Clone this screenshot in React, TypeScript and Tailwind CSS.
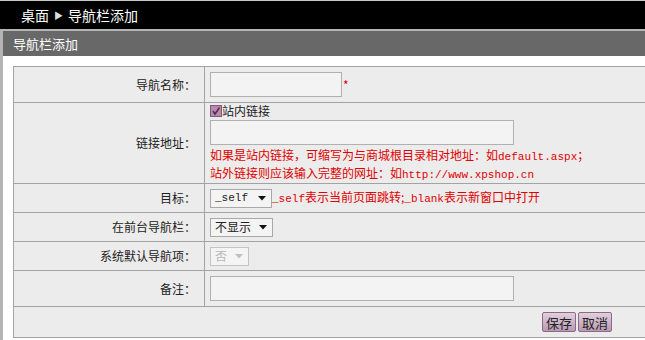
import React from "react";

const cjk = "font-['Noto_Sans_CJK_SC','Noto_Sans',sans-serif]";
const mono = "font-['Liberation_Mono','Noto_Sans_CJK_SC',monospace] text-[11px]";

function FakeSelect({
  value,
  width,
  disabled,
  mono: isMono,
}: {
  value: string;
  width: string;
  disabled?: boolean;
  mono?: boolean;
}) {
  return (
    <div
      className={`${width} h-[19px] flex items-center justify-between border pl-[4px] pr-[5px] bg-[#f4f4f4] ${
        disabled ? "border-[#c4c4c4] text-[#b8b8b8]" : "border-[#a8a8a8] text-[#222]"
      }`}
    >
      <span className={isMono ? "font-['Liberation_Mono',monospace] text-[11px]" : "text-[12px]"}>
        {value}
      </span>
      <svg width="8" height="5" viewBox="0 0 8 5">
        <path d="M0 0 H8 L4 4.5 Z" fill={disabled ? "#c0c0c0" : "#111"} />
      </svg>
    </div>
  );
}

function Row({
  label,
  height,
  children,
}: {
  label: string;
  height: string;
  children?: React.ReactNode;
}) {
  return (
    <div className={`grid grid-cols-[191px_1fr] border-b border-[#a3a3a3] ${height}`}>
      <div className="border-r border-[#a3a3a3] flex items-center justify-end pr-[8px] text-[12px] text-[#222]">
        {label}
      </div>
      <div className="flex flex-col justify-center pl-[5px]">{children}</div>
    </div>
  );
}

export default function App() {
  return (
    <div className={`w-[645px] h-[340px] overflow-hidden bg-white ${cjk}`}>
      <div className="border-t border-[#c8c8c8] h-[29px] bg-black flex items-center pl-[21px] text-white text-[14px]">
        桌面
        <span className="text-[9px] mx-[5px] mt-[2px] text-[#ddd]">▶</span>
        导航栏添加
      </div>
      <div className="border-t-2 border-l-[3px] border-[#b4b4b4] h-[311px]">
        <div className="h-[25px] bg-[#686868] text-white text-[13px] flex items-center pl-[10px]">
          导航栏添加
        </div>
        <div className="pt-[10px] pl-[10px]">
          <div className="w-[640px] border border-[#a3a3a3] bg-[#ececec]">
            <Row label="导航名称：" height="h-[36px]">
              <div className="flex items-center">
                <div className="w-[132px] h-[25px] border border-[#b0b0b0] bg-[#f3f3f3]" />
                <span className="text-[#e00000] text-[12px] ml-[1px]">*</span>
              </div>
            </Row>
            <Row label="链接地址：" height="h-[81px]">
              <div className="flex items-center h-[16px] text-[12px] text-[#222]">
                <span className="w-[12px] h-[12px] bg-[#b98ab0] border border-[#7d5a78] flex items-center justify-center">
                  <svg width="10" height="10" viewBox="0 0 10 10">
                    <path d="M2 5 L4 8 L8.5 1.5" stroke="#5a2c55" strokeWidth="1.6" fill="none" />
                  </svg>
                </span>
                <span>站内链接</span>
              </div>
              <div className="w-[304px] h-[25px] border border-[#b0b0b0] bg-[#f3f3f3] mt-[1px]" />
              <div className="text-[#e00000] text-[12px] leading-[15px] mt-[2px]">
                <div>
                  如果是站内链接，可缩写为与商城根目录相对地址：如<span className={mono}>default.aspx</span>；
                </div>
                <div>
                  站外链接则应该输入完整的网址：如<span className={mono}>http://www.xpshop.cn</span>
                </div>
              </div>
            </Row>
            <Row label="目标：" height="h-[29px]">
              <div className="flex items-center">
                <FakeSelect value="_self" width="w-[62px]" mono />
                <span className="text-[#e00000] text-[12px]">
                  <span className={mono}>_self</span>表示当前页面跳转;<span className={mono}>_blank</span>
                  表示新窗口中打开
                </span>
              </div>
            </Row>
            <Row label="在前台导航栏：" height="h-[29px]">
              <FakeSelect value="不显示" width="w-[63px]" />
            </Row>
            <Row label="系统默认导航项：" height="h-[29px]">
              <FakeSelect value="否" width="w-[39px]" disabled />
            </Row>
            <Row label="备注：" height="h-[36px]">
              <div className="w-[304px] h-[25px] border border-[#b0b0b0] bg-[#f3f3f3]" />
            </Row>
            <div className="h-[30px] flex items-center justify-end pr-[40px] gap-[2px]">
              {["保存", "取消"].map((t) => (
                <button
                  key={t}
                  className="h-[20px] px-[3px] text-[13px] leading-none text-[#222] border border-[#8a6a85] rounded-[2px] bg-gradient-to-b from-[#e2cfdf] to-[#b89ab3]"
                >
                  {t}
                </button>
              ))}
            </div>
          </div>
        </div>
      </div>
    </div>
  );
}
